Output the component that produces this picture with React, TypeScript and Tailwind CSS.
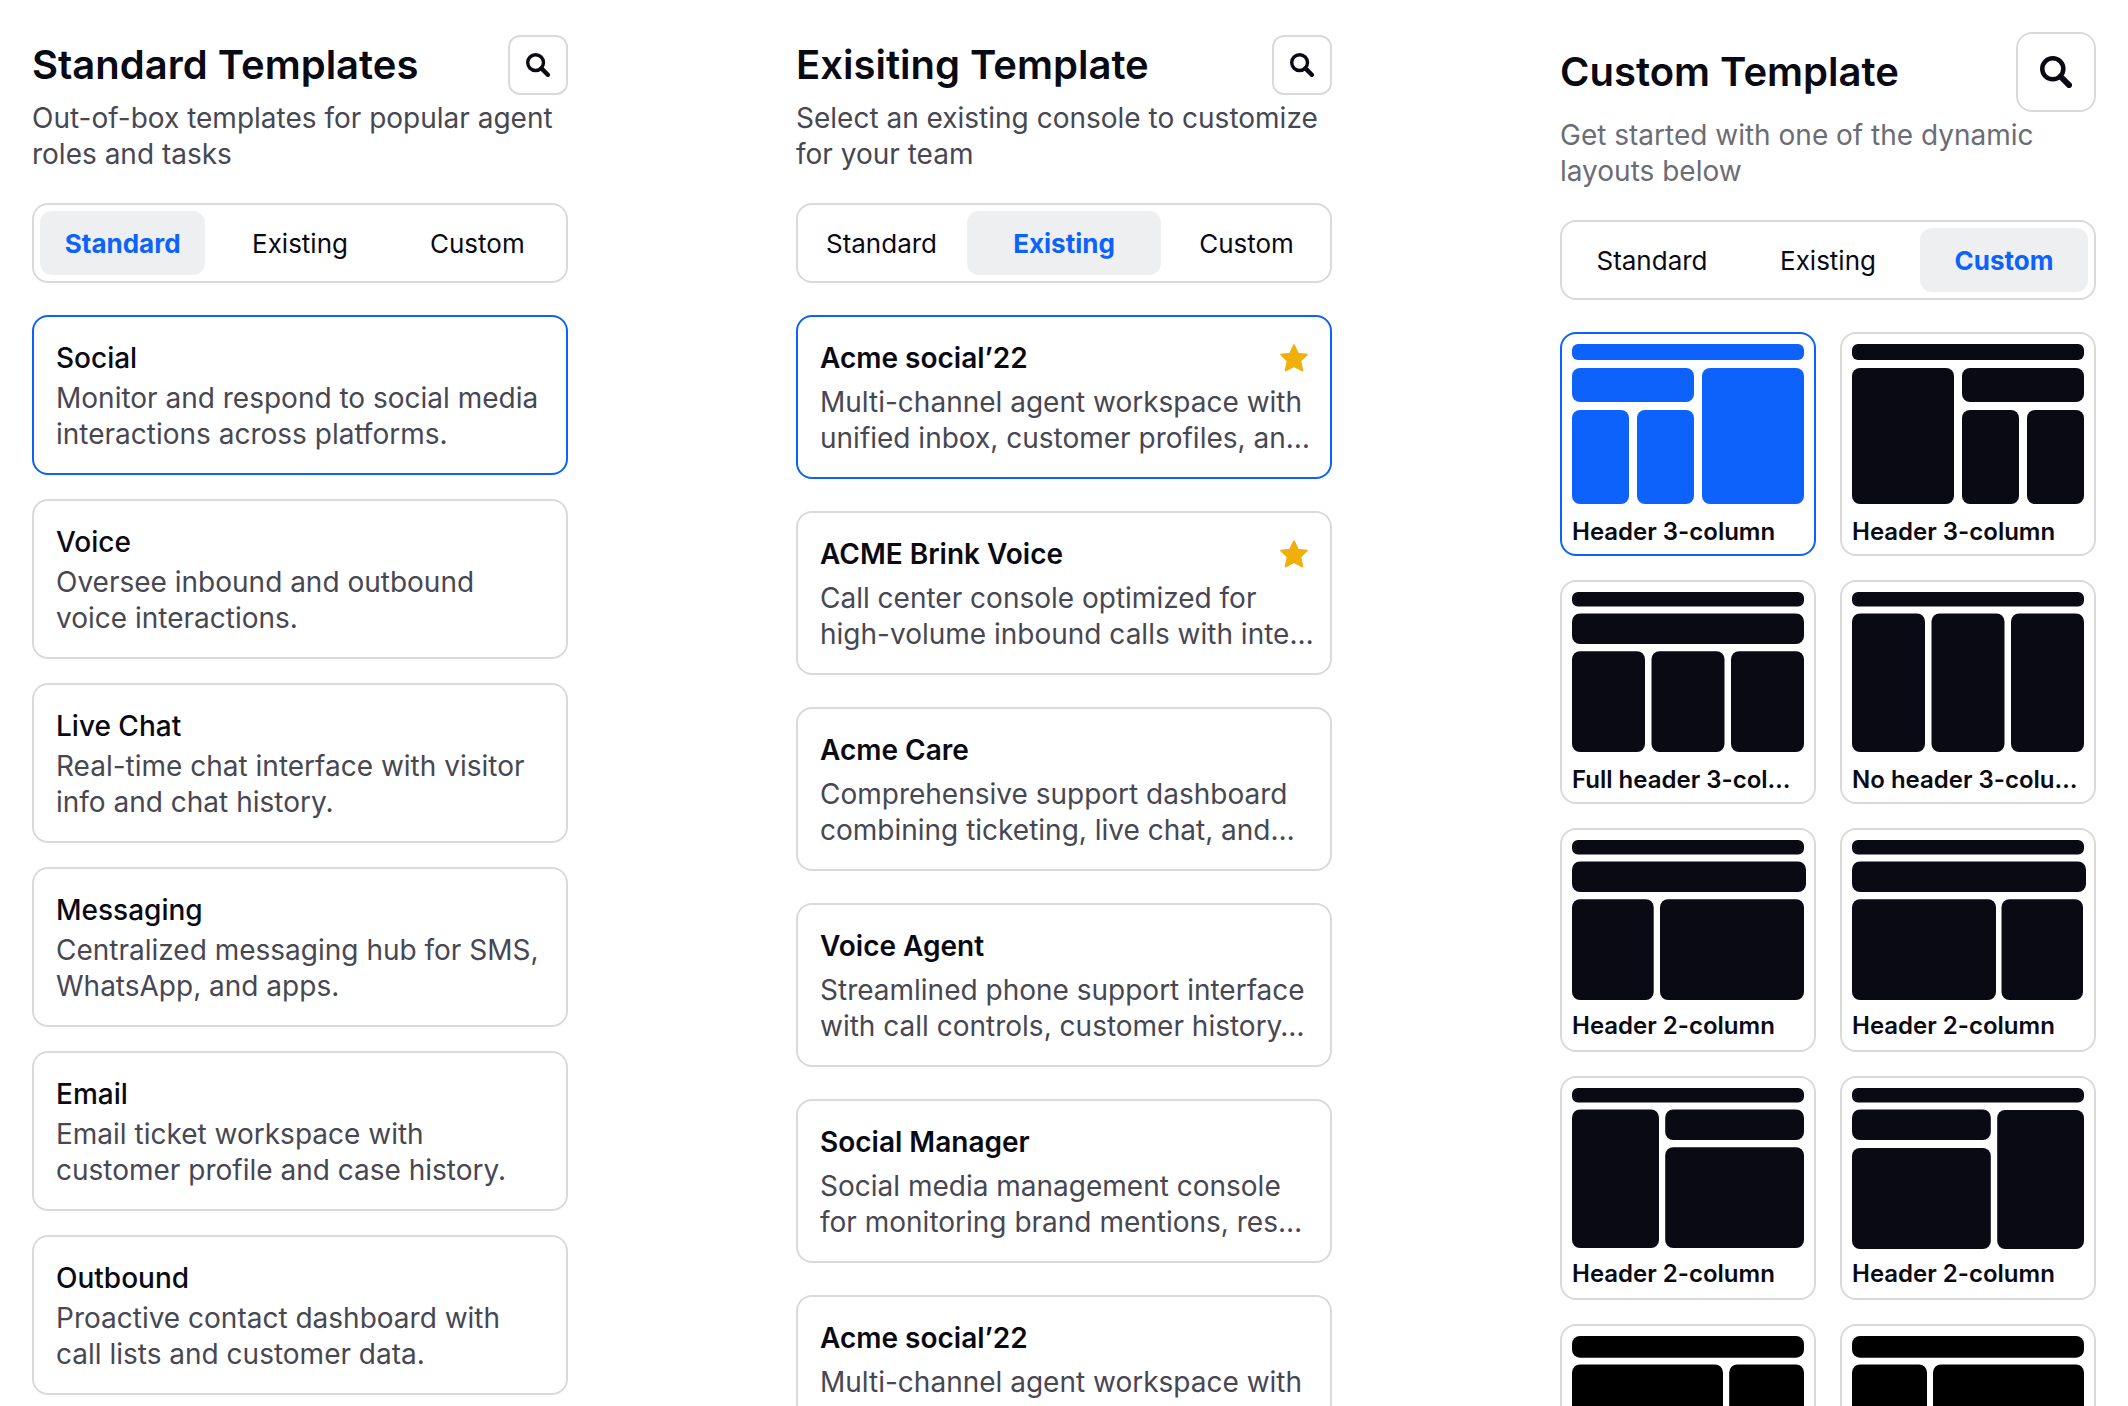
import React from "react";

const fontStack = "font-['Inter',sans-serif]";

type Block = [x: number, y: number, w: number, h: number];

type Layout = {
  title: string;
  blocks: Block[];
  tall?: boolean;
  fill?: string;
};

const standardTemplates = [
  { title: "Social", desc: "Monitor and respond to social media interactions across platforms." },
  { title: "Voice", desc: "Oversee inbound and outbound voice interactions." },
  { title: "Live Chat", desc: "Real-time chat interface with visitor info and chat history." },
  { title: "Messaging", desc: "Centralized messaging hub for SMS, WhatsApp, and apps." },
  { title: "Email", desc: "Email ticket workspace with customer profile and case history." },
  { title: "Outbound", desc: "Proactive contact dashboard with call lists and customer data." },
];

const existingTemplates = [
  {
    title: "Acme social’22",
    desc: "Multi-channel agent workspace with unified inbox, customer profiles, an…",
    starred: true,
  },
  {
    title: "ACME Brink Voice",
    desc: "Call center console optimized for high-volume inbound calls with inte…",
    starred: true,
  },
  {
    title: "Acme Care",
    desc: "Comprehensive support dashboard combining ticketing, live chat, and…",
  },
  {
    title: "Voice Agent",
    desc: "Streamlined phone support interface with call controls, customer history…",
  },
  {
    title: "Social Manager",
    desc: "Social media management console for monitoring brand mentions, res…",
  },
  {
    title: "Acme social’22",
    desc: "Multi-channel agent workspace with unified inbox, customer profiles, an…",
  },
];

// first block of each layout is the thin top bar
const layouts: Layout[] = [
  {
    title: "Header 3-column",
    tall: true,
    blocks: [[0, 0, 232, 16], [0, 24, 122, 34], [0, 66, 57, 94], [65, 66, 57, 94], [130, 24, 102, 136]],
  },
  {
    title: "Header 3-column",
    tall: true,
    blocks: [[0, 0, 232, 16], [0, 24, 102, 136], [110, 24, 122, 34], [110, 66, 57, 94], [175, 66, 57, 94]],
  },
  {
    title: "Full header 3-col…",
    tall: true,
    blocks: [[0, 0, 232, 14.5], [0, 21.5, 232, 30.5], [0, 59.2, 73, 100.8], [79.5, 59.2, 73, 100.8], [159, 59.2, 73, 100.8]],
  },
  {
    title: "No header 3-colu…",
    tall: true,
    blocks: [[0, 0, 232, 14.5], [0, 21.5, 73, 138.5], [79.5, 21.5, 73, 138.5], [159, 21.5, 73, 138.5]],
  },
  {
    title: "Header 2-column",
    blocks: [[0, 0, 232, 14.5], [0, 21.5, 234, 30.5], [0, 59.2, 81.7, 100.8], [88, 59.2, 144, 100.8]],
  },
  {
    title: "Header 2-column",
    blocks: [[0, 0, 232, 14.5], [0, 21.5, 234, 30.5], [0, 59.2, 144, 100.8], [149.5, 59.2, 81.5, 100.8]],
  },
  {
    title: "Header 2-column",
    blocks: [[0, 0, 232, 14.5], [0, 21.5, 87, 138.5], [93.2, 21.5, 138.8, 30.5], [93.2, 59.2, 138.8, 100.8]],
  },
  {
    title: "Header 2-column",
    blocks: [[0, 0, 232, 14.5], [0, 21.5, 138.8, 30.5], [0, 60, 138.8, 101], [145.2, 22, 86.8, 139]],
  },
  {
    title: "Header 2-column",
    fill: "#000000",
    blocks: [[0, 0, 232, 21.7], [0, 28.5, 151, 131.5], [157.2, 28.5, 74.8, 131.5]],
  },
  {
    title: "Header 2-column",
    fill: "#000000",
    blocks: [[0, 0, 232, 21.7], [0, 28.5, 75, 131.5], [81, 28.5, 151, 131.5]],
  },
];

const SearchIcon: React.FC<{ className: string }> = ({ className }) => (
  <svg viewBox="0 0 24 24" fill="none" stroke="currentColor" className={className} aria-hidden="true">
    <circle cx="9.6" cy="9.6" r="7.9" strokeWidth="3.4" />
    <path d="M15.4 15.4L21.8 21.8" strokeWidth="4.4" strokeLinecap="round" />
  </svg>
);

const StarIcon = () => (
  <svg viewBox="0 0 28 28" className="size-7 shrink-0" aria-label="Favorite">
    <path
      d="M14 0.9L18.1 9.4L27.2 10.5L20.6 17L22.6 26.8L14 22.4L5.4 26.8L7.4 17L0.8 10.5L9.9 9.4Z"
      fill="#efb00c"
      stroke="#efb00c"
      strokeWidth="1.4"
      strokeLinejoin="round"
    />
  </svg>
);

const Tabs: React.FC<{ active: string; className: string }> = ({ active, className }) => (
  <div role="tablist" className={`mt-[31px] grid rounded-2xl border-2 border-[#dadadb] p-[6px] ${className}`}>
    {["Standard", "Existing", "Custom"].map((tab) => (
      <button
        key={tab}
        role="tab"
        aria-selected={tab === active}
        className={`h-16 rounded-xl pt-0.5 text-[26px] leading-8 ${
          tab === active ? "bg-[#eeeff1] font-bold text-[#0d62fb]" : "text-[#0a0a14]"
        }`}
      >
        {tab}
      </button>
    ))}
  </div>
);

const Panel: React.FC<{
  title: string;
  subtitle: string;
  active: string;
  tabsClass: string;
  large?: boolean;
  children: React.ReactNode;
}> = ({ title, subtitle, active, tabsClass, large, children }) => (
  <section className={`h-full overflow-hidden px-8 ${large ? "pt-8" : "pt-[35px]"}`}>
    <header className="flex items-center justify-between">
      <h1 className="text-[40px] leading-[48px] font-semibold text-[#0a0a14]">{title}</h1>
      <button
        aria-label="Search templates"
        className={`flex shrink-0 items-center justify-center border-2 border-[#dadadb] text-[#0a0a14] ${
          large ? "size-20 rounded-2xl" : "size-[60px] rounded-xl"
        }`}
      >
        <SearchIcon className={large ? "size-8" : "size-6"} />
      </button>
    </header>
    <p className={`mt-[5px] text-[28px] leading-9 ${large ? "text-[#6c6c75]" : "text-[#474752]"}`}>{subtitle}</p>
    <Tabs active={active} className={tabsClass} />
    {children}
  </section>
);

const App: React.FC = () => {
  return (
    <main className={`grid h-screen grid-cols-3 gap-[164px] overflow-hidden bg-white ${fontStack}`}>
      {/* ---------- STANDARD ---------- */}
      <Panel
        title="Standard Templates"
        subtitle="Out-of-box templates for popular agent roles and tasks"
        active="Standard"
        tabsClass="grid-cols-3 gap-3"
      >
        <div className="mt-8 flex flex-col gap-6">
          {standardTemplates.map((item, index) => (
            <button
              key={index}
              className={`rounded-2xl border-2 px-[22px] pt-[23px] pb-[21px] text-left ${
                index === 0 ? "border-[#0d62fb]" : "border-[#dadadb]"
              }`}
            >
              <h2 className="text-[28px] leading-9 font-medium text-[#0a0a14]">{item.title}</h2>
              <p className="mt-1 text-[28px] leading-9 text-[#474752]">{item.desc}</p>
            </button>
          ))}
        </div>
      </Panel>

      {/* ---------- EXISTING ---------- */}
      <Panel
        title="Exisiting Template"
        subtitle="Select an existing console to customize for your team"
        active="Existing"
        tabsClass="grid-cols-[155fr_194fr_155fr] gap-2"
      >
        <div className="mt-8 flex flex-col gap-8">
          {existingTemplates.map((item, index) => (
            <button
              key={index}
              className={`rounded-2xl border-2 px-[22px] pt-[23px] pb-[21px] text-left ${
                index === 0 ? "border-[#0d62fb]" : "border-[#dadadb]"
              }`}
            >
              <div className="flex items-center justify-between">
                <h2 className="text-[28px] leading-9 font-semibold text-[#0a0a14]">{item.title}</h2>
                {item.starred && <StarIcon />}
              </div>
              <p className="mt-2 -mr-3 text-[28px] leading-9 text-[#474752]">{item.desc}</p>
            </button>
          ))}
        </div>
      </Panel>

      {/* ---------- CUSTOM ---------- */}
      <Panel
        title="Custom Template"
        subtitle="Get started with one of the dynamic layouts below"
        active="Custom"
        tabsClass="grid-cols-3 gap-2"
        large
      >
        <div className="mt-8 grid grid-cols-2 gap-6">
          {layouts.map((layout, index) => (
            <button
              key={index}
              className={`flex min-h-56 min-w-0 flex-col rounded-2xl border-2 p-[10px] pb-0 text-left ${
                index === 0 ? "border-[#0d62fb]" : "border-[#dadadb]"
              }`}
            >
              <svg viewBox="0 0 232 160" className="block h-auto w-full overflow-visible" aria-hidden="true">
                {layout.blocks.map(([x, y, w, h], i) => (
                  <rect
                    key={i}
                    x={x}
                    y={y}
                    width={w}
                    height={h}
                    rx={h < 20 ? 6 : 8}
                    fill={index === 0 ? "#0d62fb" : layout.fill ?? "#0a0a14"}
                  />
                ))}
              </svg>
              <span
                className={`w-full truncate text-2xl leading-8 font-semibold text-[#0a0a14] ${
                  layout.tall ? "mt-3" : "mt-2.5"
                }`}
              >
                {layout.title}
              </span>
            </button>
          ))}
        </div>
      </Panel>
    </main>
  );
};

export default App;
